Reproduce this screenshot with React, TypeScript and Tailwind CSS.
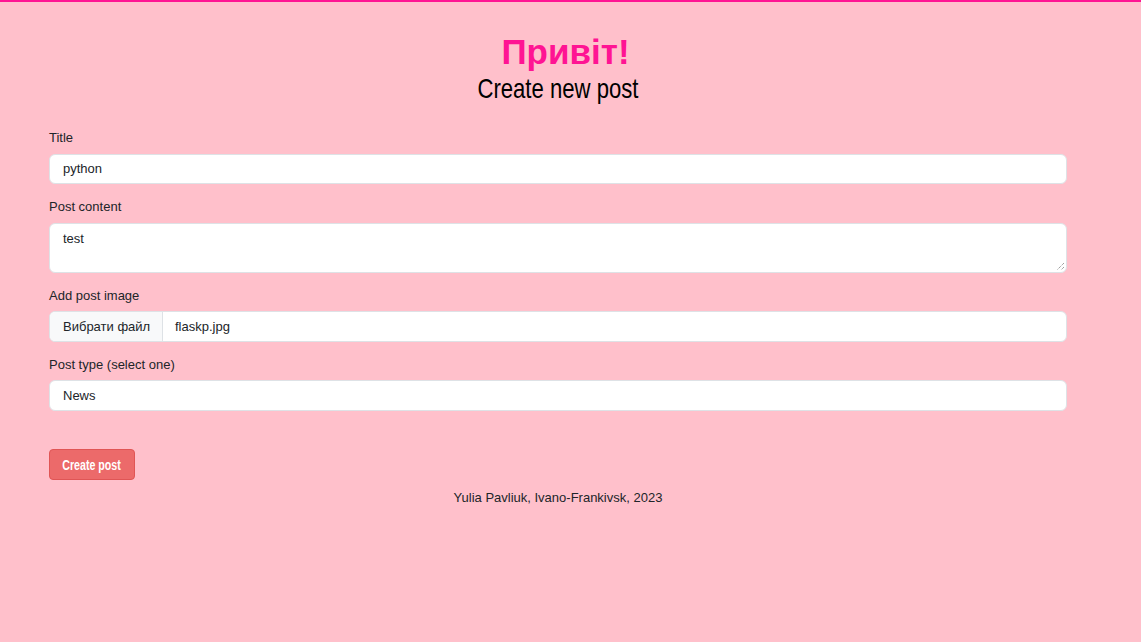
import React from "react";

export default function App() {
  const field =
    "w-full h-[31px] bg-white border border-[#dee2e6] rounded-[6px] px-[13px] text-[13px] text-[#212529] flex items-center";
  return (
    <div
      className="min-h-[642px] w-[1141px] bg-[#ffc0cb] border-t-2 border-[#ff1493]"
      style={{ fontFamily: '"Liberation Sans", Arial, sans-serif' }}
    >
      <div className="w-[1018px] ml-[49px]">
        <h1 className="text-center text-[35px] font-bold text-[#ff1493] leading-[40px] pt-[30px] pl-[15px]">
          Привіт!
        </h1>
        <div className="flex justify-center">
          <h2 className="inline-block text-[28px] text-black leading-[34px] scale-x-[0.79] origin-center whitespace-nowrap">
            Create new post
          </h2>
        </div>

        <div className="mt-[21px] text-[13px] text-[#212529]">
          <div className="mb-[12px]">
            <div className="h-[21px] leading-[21px] mb-[6px]">Title</div>
            <div className="w-full h-[30px] bg-white border border-[#dee2e6] rounded-[6px] px-[13px] text-[13px] text-[#212529] flex items-center">
              python
            </div>
          </div>
          <div className="mb-[12px]">
            <div className="h-[21px] leading-[21px] mb-[6px]">Post content</div>
            <div className="relative w-full h-[50px] bg-white border border-[#dee2e6] rounded-[6px] px-[13px] pt-[5px] text-[13px]">
              test
              <svg
                className="absolute right-[1px] bottom-[1px]"
                width="10"
                height="10"
                viewBox="0 0 10 10"
              >
                <line x1="9" y1="2" x2="2" y2="9" stroke="#777" strokeWidth="1" strokeDasharray="1 1" />
                <line x1="9" y1="6" x2="6" y2="9" stroke="#777" strokeWidth="1" strokeDasharray="1 1" />
              </svg>
            </div>
          </div>
          <div className="mb-[12px]">
            <div className="h-[21px] leading-[21px] mb-[5px]">Add post image</div>
            <div className="w-full h-[31px] bg-white border border-[#dee2e6] rounded-[6px] flex items-stretch overflow-hidden">
              <div className="bg-[#f8f9fa] border-r border-[#dee2e6] w-[113px] pl-[13px] flex items-center">
                Вибрати файл
              </div>
              <div className="px-[12px] flex items-center">flaskp.jpg</div>
            </div>
          </div>
          <div>
            <div className="h-[21px] leading-[21px] mb-[5px]">Post type (select one)</div>
            <div className={field}>News</div>
          </div>

          <button className="mt-[38px] h-[31px] w-[86px] flex items-center justify-center bg-[#ec6a6a] border border-[#e05555] rounded-[4px] text-white text-[14px] font-bold pt-[1px]">
            <span className="inline-block scale-x-[0.76] whitespace-nowrap">Create post</span>
          </button>
          <div className="text-center text-[13px] text-[#212529] leading-[21px] mt-[7px]">
            Yulia Pavliuk, Ivano-Frankivsk, 2023
          </div>
        </div>
      </div>
    </div>
  );
}
